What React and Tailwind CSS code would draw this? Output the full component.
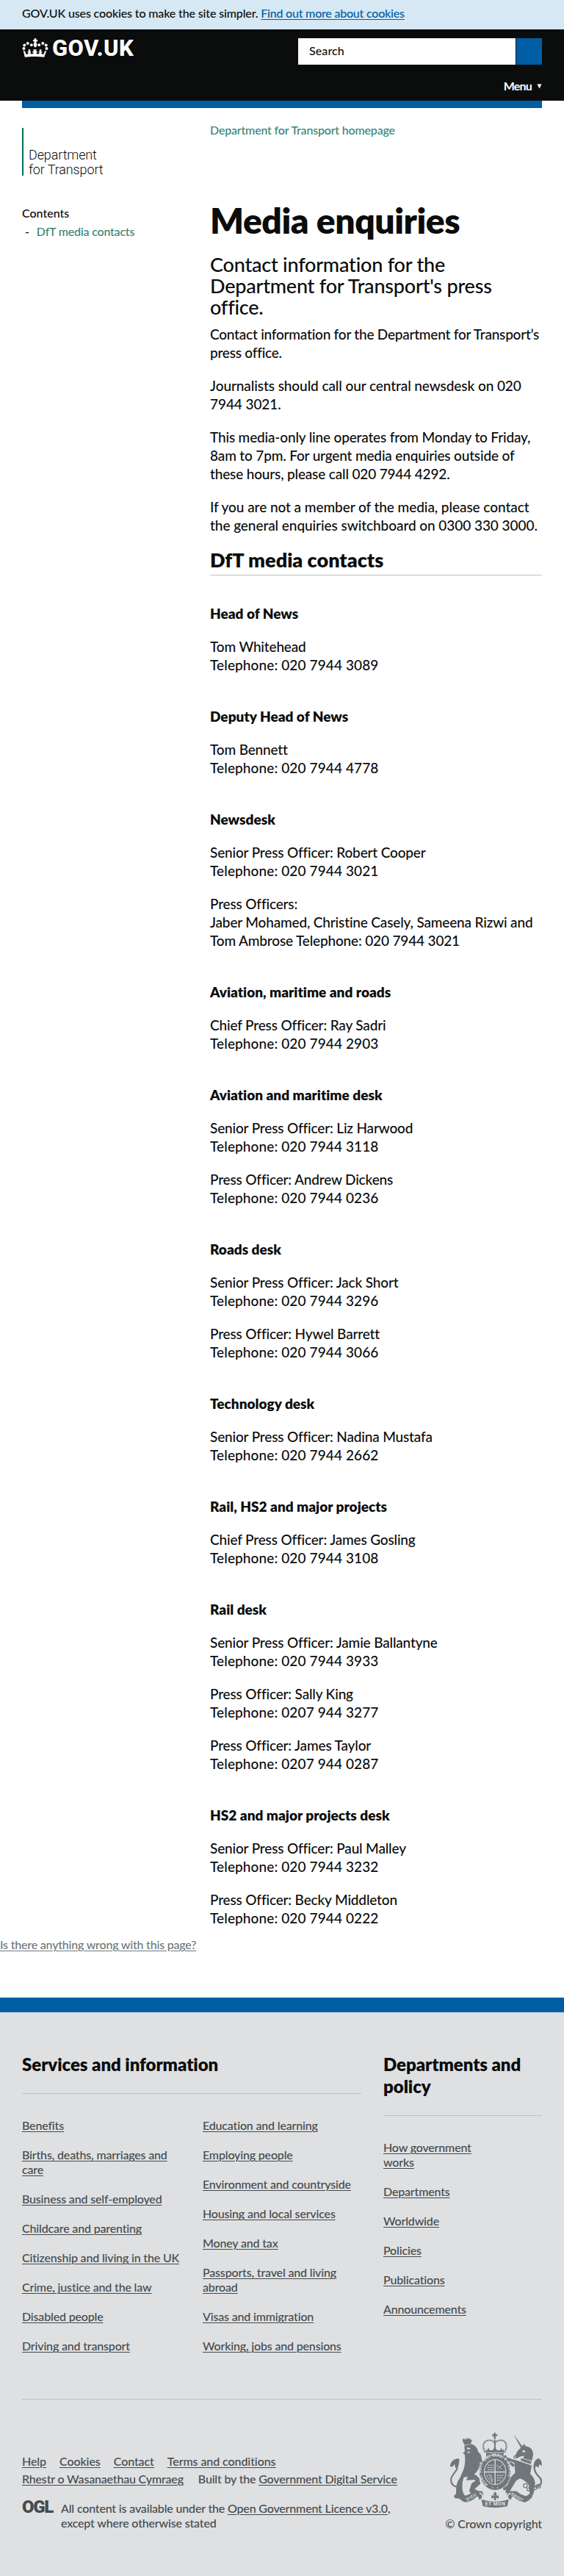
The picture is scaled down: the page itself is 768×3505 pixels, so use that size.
const sections = [
  { title: 'Head of News', people: [['Tom Whitehead', 'Telephone: 020 7944 3089']] },
  { title: 'Deputy Head of News', people: [['Tom Bennett', 'Telephone: 020 7944 4778']] },
  {
    title: 'Newsdesk',
    people: [
      ['Senior Press Officer: Robert Cooper', 'Telephone: 020 7944 3021'],
      ['Press Officers:', 'Jaber Mohamed, Christine Casely, Sameena Rizwi and', 'Tom Ambrose Telephone: 020 7944 3021'],
    ],
  },
  { title: 'Aviation, maritime and roads', people: [['Chief Press Officer: Ray Sadri', 'Telephone: 020 7944 2903']] },
  {
    title: 'Aviation and maritime desk',
    people: [
      ['Senior Press Officer: Liz Harwood', 'Telephone: 020 7944 3118'],
      ['Press Officer: Andrew Dickens', 'Telephone: 020 7944 0236'],
    ],
  },
  {
    title: 'Roads desk',
    people: [
      ['Senior Press Officer: Jack Short', 'Telephone: 020 7944 3296'],
      ['Press Officer: Hywel Barrett', 'Telephone: 020 7944 3066'],
    ],
  },
  { title: 'Technology desk', people: [['Senior Press Officer: Nadina Mustafa', 'Telephone: 020 7944 2662']] },
  { title: 'Rail, HS2 and major projects', people: [['Chief Press Officer: James Gosling', 'Telephone: 020 7944 3108']] },
  {
    title: 'Rail desk',
    people: [
      ['Senior Press Officer: Jamie Ballantyne', 'Telephone: 020 7944 3933'],
      ['Press Officer: Sally King', 'Telephone: 0207 944 3277'],
      ['Press Officer: James Taylor', 'Telephone: 0207 944 0287'],
    ],
  },
  {
    title: 'HS2 and major projects desk',
    people: [
      ['Senior Press Officer: Paul Malley', 'Telephone: 020 7944 3232'],
      ['Press Officer: Becky Middleton', 'Telephone: 020 7944 0222'],
    ],
  },
];

const services = [
  [['Benefits'], ['Births, deaths, marriages and', 'care'], ['Business and self-employed'], ['Childcare and parenting'], ['Citizenship and living in the UK'], ['Crime, justice and the law'], ['Disabled people'], ['Driving and transport']],
  [['Education and learning'], ['Employing people'], ['Environment and countryside'], ['Housing and local services'], ['Money and tax'], ['Passports, travel and living', 'abroad'], ['Visas and immigration'], ['Working, jobs and pensions']],
];
const departments = [['How government', 'works'], ['Departments'], ['Worldwide'], ['Policies'], ['Publications'], ['Announcements']];

function Lines({ lines }) {
  return lines.map((line, i) => (
    <span key={i} className={line.startsWith('Telephone') ? 'tracking-[0.11px]' : undefined}>
      {i > 0 && <br />}
      {line}
    </span>
  ));
}

function Crown() {
  return (
    <svg width="36" height="26" viewBox="0 0 36 26" fill="#fff" className="block">
      <path d="M16.8 0h2.4v2h1.8v2.4h-1.8v1.8c1 .6 1.4 1.7 1.1 2.8l-1.2 3.2h-2.2l-1.2-3.2c-.3-1.1.1-2.2 1.1-2.8v-1.8H15V2h1.8z" />
      <circle cx="12.8" cy="9.2" r="1.9" />
      <circle cx="7.7" cy="7" r="2" />
      <circle cx="3.3" cy="9.4" r="2" />
      <circle cx="2.5" cy="14" r="2" />
      <circle cx="23.2" cy="9.2" r="1.9" />
      <circle cx="28.3" cy="7" r="2" />
      <circle cx="32.7" cy="9.4" r="2" />
      <circle cx="33.5" cy="14" r="2" />
      <path d="M1.6 16.6l2.5 1.2 1.8 4.4c1.6-.2 2.8-1.2 3.2-2.6l-1.6.2.4-2.2 1.3.4-.8-2.8h3l-.8 2.8 1.4-.4.3 2.2-1.5-.2c.6 1.4 1.6 2 2.7 2 1.2 0 2.2-.7 2.6-2l-1.7.3v-2.4l1.7.3-.8-2.6h4.4l-.8 2.6 1.7-.3v2.4l-1.7-.3c.4 1.3 1.4 2 2.6 2 1.1 0 2.1-.6 2.7-2l-1.5.2.3-2.2 1.4.4-.8-2.8h3l-.8 2.8 1.3-.4.4 2.2-1.6-.2c.4 1.4 1.6 2.4 3.2 2.6l1.8-4.4 2.5-1.2-3.2 9.2c-8-1-18.4-1-26.4 0z" />
    </svg>
  );
}

function RoyalArms() {
  return (
    <svg width="125" height="102" viewBox="8 15 376 307" fill="#6f777b" className="block">
      <g id="lion">
        <path d="M62 38l7 6 3-8 5 8 4-10 5 8 7-4-1 8 6-2-6 18-26 3-8-19z" />
        <path d="M66 68l28-6c14 4 26 14 28 30l12 14c2 14 6 24 8 36l-4 40-14-18c-6 12-18 22-28 28l-32 6c-4 14-8 24-6 34-2 18 2 34 14 44l-6 10-38-2-6-10 10-8c0-24 0-46 16-66l14-32c8-22 8-44 6-62l-8-8 8-6z" />
        <path d="M86 180c18 2 34 10 42 24l-4 20-16-16-34 2z" />
        <path d="M96 222l30-20 6 22-24 22 24 12-4 12-34-4-8-14z" />
        <path d="M54 236c-30 6-46-10-42-34 4-18 22-26 26-44" fill="none" stroke="#6f777b" strokeWidth="6" />
        <path d="M8 154c0-18 12-32 34-34l4 8-6 30-10 2-4-16-8 10z" />
        <path d="M74 78l8-2 10 4-8 4zM78 92l14 3-10 4z" fill="#dee0e2" />
      </g>
      <g id="unicorn">
        <path d="M267 20l40 56-8 4z" />
        <path d="M274 110l10-20 18-18 10-12 4 10c22 2 34 18 32 38l-6 22-36-8 6-12-16 2-14 8z" />
        <path d="M298 118l44 14-2 14-44-16z" fill="#6f777b" stroke="#dee0e2" strokeWidth="4" strokeDasharray="5 4" />
        <path d="M290 132l52 18-6 34c12 10 20 24 20 40l-4 24c0 18-10 34-26 38l-8-10 16-12-4-34c-8-14-24-24-38-28l-14-2-24 22c-6 14-12 26-26 30l-6-12 20-10 10-30 22-20c0-18-4-34-2-40l-22-12-14 8 2-20 26 8z" />
        <path d="M256 202l32-20 14 14-24 16-28 46-16 4 2-12z" />
        <path d="M224 112l12-6 10 20 26 20-6 10-30-18z" />
        <path d="M354 236c26 0 34-20 22-36-14-14-26-28-22-48" fill="none" stroke="#6f777b" strokeWidth="7" />
        <path d="M350 160c-2-22 6-36 20-40 10 4 14 14 14 32l-10-8-4 14-10-6z" />
        <g fill="none" stroke="#6f777b" strokeWidth="3.5">
          <circle cx="316" cy="232" r="8" />
          <circle cx="328" cy="247" r="6" />
          <circle cx="354" cy="241" r="8" />
          <circle cx="370" cy="234" r="8" />
          <circle cx="248" cy="126" r="6" />
          <circle cx="274" cy="115" r="5" />
        </g>
        <path d="M302 90l10-4 4 8-8 2z" fill="#dee0e2" />
      </g>
      <g id="crown">
        <path d="M187 15h7v7h7v7h-7v12h-7V29h-7v-7h7z" />
        <path d="M152 96c-16-26-8-50 16-50 12 0 20 6 23 14 3-8 11-14 23-14 24 0 32 24 16 50" fill="none" stroke="#6f777b" strokeWidth="6" strokeDasharray="6 2" />
        <path d="M188 44h6v42h-6z" />
        <path d="M154 82l7 6 3-12 7 12 12-2 8-12 8 12 12 2 7-12 3 12 7-6-2 34h-70z" />
        <path d="M158 97h66" stroke="#dee0e2" strokeWidth="2.5" />
      </g>
      <g id="shield">
        <ellipse cx="192" cy="178" rx="65" ry="73" stroke="#dee0e2" strokeWidth="3" />
        <ellipse cx="192" cy="176" rx="46" ry="53" fill="#dee0e2" />
        <ellipse cx="192" cy="176" rx="43" ry="50" />
        <path d="M192 126v100M149 176h86" stroke="#dee0e2" strokeWidth="4" />
        <path d="M162 148h24M160 158h26M162 167h24M198 148l24 18M222 146l-22 20M158 188c4 16 12 24 22 30M166 186l14 30M174 186l8 26M200 190h26M200 200h24M200 210h16" stroke="#dee0e2" strokeWidth="3" strokeDasharray="7 3" fill="none" />
        <path id="garter" d="M163 226C134 208 128 166 143 143C166 103 220 103 241 143C256 170 250 210 220 228" fill="none" />
        <text fill="#dee0e2" className="font-['Roboto'] text-[18px] font-bold">
          <textPath href="#garter" textLength="268">HONI SOIT QUI MAL Y PENSE</textPath>
        </text>
        <circle cx="182" cy="240" r="2.5" fill="#dee0e2" />
        <circle cx="202" cy="240" r="2.5" fill="#dee0e2" />
      </g>
      <g id="motto">
        <path d="M38 276c26 2 48-6 66-22l34 0c8 10 6 20 0 30l-12 6c0-8-2-14-8-14-14 14-30 22-48 24-14-4-24-14-32-24z" />
        <path d="M346 276c-26 2-48-6-66-22l-34 0c-8 10-6 20 0 30l12 6c0-8 2-14 8-14 14 14 30 22 48 24 14-4 24-14 32-24z" />
        <path d="M128 262c12 4 16 14 10 26M256 262c-12 4-16 14-10 26" fill="none" stroke="#dee0e2" strokeWidth="5" />
        <path d="M136 288c36 12 76 12 112 0l-6 28c-32 8-68 8-100 0z" />
        <path d="M192 256l7 10-4 10c8-8 14-4 12 6-4 4-8 2-10-2l-2 12h-6l-2-12c-2 4-6 6-10 2-2-10 4-14 12-6l-4-10z" />
        <g fill="#dee0e2" className="font-['Roboto'] font-bold">
          <text x="151" y="314" textLength="82" className="text-[20px]">ET MON</text>
          <text transform="translate(78 295) rotate(-30)" textLength="44" className="text-[17px]">DIEU</text>
          <text transform="translate(256 270) rotate(31)" textLength="54" className="text-[17px]">DROIT</text>
        </g>
      </g>
    </svg>
  );
}

function LinkList({ items }) {
  return (
    <ul className="flex-1 space-y-5 tracking-[-0.17px]">
      {items.map((lines) => (
        <li key={lines[0]}>
          <a className="underline decoration-1 underline-offset-2">
            <Lines lines={lines} />
          </a>
        </li>
      ))}
    </ul>
  );
}

export default function App() {
  return (
    <div className="w-[768px] bg-white font-['Lato',sans-serif] text-[16px]/[20px] font-medium whitespace-nowrap text-[#0b0c0c]">
      <div className="h-10 bg-[#d5e8f3] px-[30px] pt-2 tracking-[-0.14px]">
        GOV.UK uses cookies to make the site simpler.{' '}
        <a className="tracking-[-0.22px] text-[#005ea5] underline underline-offset-2">Find out more about cookies</a>
      </div>

      <header className="h-[97px] bg-[#0b0c0c] px-[30px] pt-3 text-white">
        <div className="flex justify-between">
          <div className="flex gap-[5px]">
            <Crown />
            <span className="font-['Roboto',sans-serif] text-[31px]/[28px] font-extrabold tracking-[0.4px]">GOV.UK</span>
          </div>
          <div className="flex h-9 gap-px">
            <div className="w-[296px] bg-white px-[15px] pt-[7px] tracking-[0.1px] text-[#0b0c0c]">Search</div>
            <div className="w-[35px] bg-[#005ea5]" />
          </div>
        </div>
        <div className="mt-[19px] flex items-center justify-end gap-[7px] font-bold tracking-[-0.8px]">
          Menu
          <svg width="7" height="7" viewBox="0 0 7 7" fill="#fff">
            <path d="M.5.5h6L3.5 6.5z" />
          </svg>
        </div>
      </header>
      <div className="mx-[30px] h-[10px] bg-[#005ea5]" />

      <main className="flex px-[30px]">
        <aside className="w-[256px] pt-[27px]">
          <div className="h-[65px] border-l-2 border-[#006c56] pt-[27px] pl-[7px] font-['Roboto',sans-serif] text-[18px]/[20px] font-light tracking-[-0.12px]">
            Department
            <br />
            for Transport
          </div>
          <h2 className="mt-[41px]">Contents</h2>
          <p className="mt-[5px] flex gap-[10px] pl-1 tracking-[-0.2px] text-[#398373]">
            <span className="text-[#0b0c0c]">-</span>DfT media contacts
          </p>
        </aside>

        <article className="w-[452px] text-[19px]/[25px] tracking-[-0.16px]">
          <p className="pt-5 text-[16px]/[20px] tracking-[-0.18px] text-[#398373]">Department for Transport homepage</p>
          <h1 className="mt-[88px] text-[48px]/[50px] font-extrabold tracking-[-0.45px]">Media enquiries</h1>
          <p className="mt-5 text-[27px]/[29px] tracking-[-0.21px]">
            Contact information for the
            <br />
            Department for Transport's press
            <br />
            office.
          </p>
          <div className="mt-[10px] space-y-5">
            <p className="tracking-[-0.22px]">
              Contact information for the Department for Transport’s
              <br />
              press office.
            </p>
            <p className="tracking-[-0.08px]">
              Journalists should call our central newsdesk on 020
              <br />
              7944 3021.
            </p>
            <p className="tracking-[-0.16px]">
              This media-only line operates from Monday to Friday,
              <br />
              8am to 7pm. For urgent media enquiries outside of
              <br />
              these hours, please call 020 7944 4292.
            </p>
            <p className="tracking-[-0.06px]">
              If you are not a member of the media, please contact
              <br />
              the general enquiries switchboard on 0300 330 3000.
            </p>
          </div>
          <h2 className="mt-5 border-b border-[#bfc1c3] pb-[6px] text-[27px]/[29px] font-extrabold tracking-[0px]">DfT media contacts</h2>
          <div className="pt-[39px]">
            {sections.map((s) => (
              <section key={s.title} className="mb-[45px] space-y-5 last:mb-0">
                <h3 className="font-extrabold tracking-[0.02px]">{s.title}</h3>
                {s.people.map((lines) => (
                  <p key={lines[0]}>
                    <Lines lines={lines} />
                  </p>
                ))}
              </section>
            ))}
          </div>
        </article>
      </main>

      <p className="mt-[14px] h-[82px] tracking-[-0.2px] text-[#6f777b]">
        <a className="underline underline-offset-2">Is there anything wrong with this page?</a>
      </p>

      <footer className="h-[787px] border-t-[20px] border-[#005ea5] bg-[#dee0e2] px-[30px] pt-14 tracking-[-0.17px] text-[#454a4c]">
        <div className="flex h-[471px] gap-[30px] border-b border-[#bfc1c3]">
          <div className="w-[462px]">
            <h2 className="mb-[33px] border-b border-[#bfc1c3] pb-6 text-[24px]/[30px] font-extrabold tracking-[-0.04px] text-[#0b0c0c]">Services and information</h2>
            <div className="flex gap-[30px]">
              <LinkList items={services[0]} />
              <LinkList items={services[1]} />
            </div>
          </div>
          <div className="flex-1">
            <h2 className="mb-[33px] border-b border-[#bfc1c3] pb-6 text-[24px]/[30px] font-extrabold tracking-[-0.04px] text-[#0b0c0c]">
              Departments and
              <br />
              policy
            </h2>
            <LinkList items={departments} />
          </div>
        </div>
        <div className="flex justify-between">
          <div className="pt-[74px]">
            <div className="flex gap-[18px] tracking-[-0.08px] underline underline-offset-2">
              <a>Help</a>
              <a>Cookies</a>
              <a>Contact</a>
              <a>Terms and conditions</a>
            </div>
            <div className="mt-1 flex gap-5 tracking-[-0.18px]">
              <a className="underline underline-offset-2">Rhestr o Wasanaethau Cymraeg</a>
              <span>
                Built by the <a className="underline underline-offset-2">Government Digital Service</a>
              </span>
            </div>
            <div className="mt-5 flex gap-3">
              <span className="w-[41px] font-['Roboto',sans-serif] text-[24px]/[17px] font-black tracking-[-1.3px]">OGL</span>
              <p>
                All content is available under the <a className="underline underline-offset-2">Open Government Licence v3.0</a>,
                <br />
                except where otherwise stated
              </p>
            </div>
          </div>
          <div className="flex flex-col items-end pt-[45px]">
            <RoyalArms />
            <p className="mt-[12px]">© Crown copyright</p>
          </div>
        </div>
      </footer>
    </div>
  );
}
